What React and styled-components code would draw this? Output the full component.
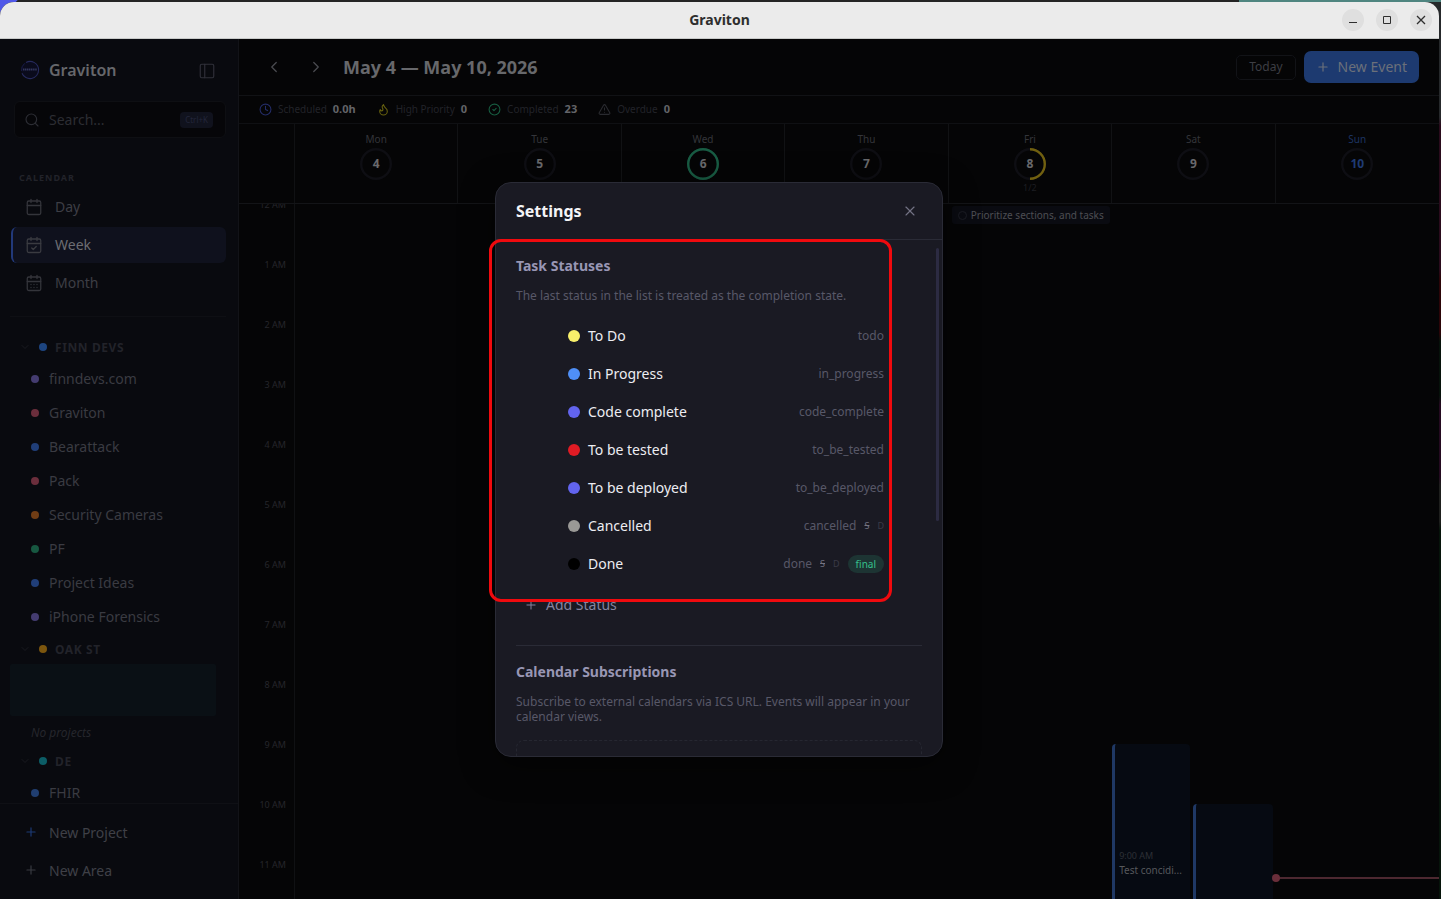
import React from 'react'
import styled, { createGlobalStyle, css } from 'styled-components'
import {
  Calendar, CalendarCheck, CalendarDays, ChevronDown, ChevronLeft, ChevronRight,
  CircleCheck, Clock, Flame, PanelLeft, Plus, Search, TriangleAlert, X
} from 'lucide-react'

const HOUR = 60

const areas = [
  {
    name: 'FINN DEVS',
    color: '#1d4580',
    projects: [
      { name: 'finndevs.com', color: '#443c70' },
      { name: 'Graviton', color: '#6b2e3c' },
      { name: 'Bearattack', color: '#203e78' },
      { name: 'Pack', color: '#6b2e3c' },
      { name: 'Security Cameras', color: '#703d15' },
      { name: 'PF', color: '#175841' },
      { name: 'Project Ideas', color: '#203e78' },
      { name: 'iPhone Forensics', color: '#443c70' }
    ]
  },
  { name: 'OAK ST', color: '#7c560e', projects: [] },
  { name: 'DE', color: '#0c5d66', projects: [{ name: 'FHIR', color: '#203e70' }] }
]

const days = [
  { name: 'Mon', date: 4 },
  { name: 'Tue', date: 5 },
  { name: 'Wed', date: 6, progress: 1, color: '#185c43' },
  { name: 'Thu', date: 7 },
  { name: 'Fri', date: 8, progress: 0.5, color: '#71600f', count: '1/2' },
  { name: 'Sat', date: 9 },
  { name: 'Sun', date: 10, today: true }
]

const hours = ['12 AM', '1 AM', '2 AM', '3 AM', '4 AM', '5 AM', '6 AM', '7 AM', '8 AM', '9 AM', '10 AM', '11 AM']

const statuses = [
  { name: 'To Do', slug: 'todo', color: '#f9f06b' },
  { name: 'In Progress', slug: 'in_progress', color: '#4f8ff7' },
  { name: 'Code complete', slug: 'code_complete', color: '#6264ee' },
  { name: 'To be tested', slug: 'to_be_tested', color: '#e01b24' },
  { name: 'To be deployed', slug: 'to_be_deployed', color: '#6264ee' },
  { name: 'Cancelled', slug: 'cancelled', color: '#9a9996', flags: true },
  { name: 'Done', slug: 'done', color: '#000000', flags: true, final: true }
]

const GlobalStyle = createGlobalStyle`
  * {
    box-sizing: border-box;
  }
  body {
    margin: 0;
    font-family: 'Noto Sans', sans-serif;
    font-size: 14px;
    overflow: hidden;
  }
  button, input {
    font-family: inherit;
    font-size: inherit;
    margin: 0;
  }
  h1, h2, h3, p, ul {
    margin: 0;
    padding: 0;
  }
  ul {
    list-style: none;
  }
`

const Desktop = styled.div`
  height: 100vh;
  padding: 2px 2px 0 0;
  background:
    linear-gradient(135deg, #5058e8 0 12px, transparent 13px),
    linear-gradient(90deg, #242424 0 86%, #4f8580 86%) top / 100% 2px no-repeat,
    linear-gradient(180deg, #26292b 0 13%, #2a0b1c 14% 30%, #2c0508 31% 37%, #06120a 38% 44%, #240a20 45% 53%, #1e1f1d 54% 58%, #06140a 59% 100%);
`

const Window = styled.div`
  height: 100%;
  display: flex;
  flex-direction: column;
  overflow: hidden;
  border-radius: 14px 14px 0 0;
  background: #050506;
`

const TitleBar = styled.header`
  display: grid;
  grid-template-columns: 1fr auto 1fr;
  align-items: center;
  flex: none;
  height: 37px;
  padding: 0 7px;
  background: #ebebeb;
  border-bottom: 1px solid #c8cac9;
`

const WindowTitle = styled.h1`
  grid-column: 2;
  font-size: 14px;
  font-weight: 700;
  line-height: 20px;
  color: #2e2e2e;
`

const WindowButtons = styled.div`
  display: flex;
  justify-content: flex-end;
  gap: 12px;
`

const RoundButton = styled.button`
  display: grid;
  place-items: center;
  width: 22px;
  height: 22px;
  padding: 0;
  border: none;
  border-radius: 50%;
  background: #dfdfdf;
  color: #2e2e2e;
`

const AppBody = styled.div`
  position: relative;
  flex: 1;
  min-height: 0;
  display: flex;
`

const Sidebar = styled.aside`
  flex: none;
  width: 239px;
  display: flex;
  flex-direction: column;
  background: #090a0f;
  border-right: 1px solid #121318;
  color: #3a3b42;
`

const Brand = styled.div`
  display: flex;
  align-items: center;
  gap: 9px;
  padding: 20px 24px 20px 20px;
  height: 62px;
  color: #30313a;
`

const BrandName = styled.h2`
  flex: 1;
  font-size: 16px;
  font-weight: 600;
  line-height: 22px;
  color: #66676b;
`

const IconButton = styled.button`
  display: grid;
  place-items: center;
  width: ${props => props.$size || '16px'};
  height: ${props => props.$size || '16px'};
  padding: 0;
  border: none;
  background: none;
  color: ${props => props.$color || 'inherit'};
`

const SearchBox = styled.label`
  display: flex;
  align-items: center;
  gap: 9px;
  height: 37px;
  margin: 0 12px 0 14px;
  padding: 0 12px 0 9px;
  border: 1px solid #0e0f13;
  border-radius: 6px;
  background: #060609;
  color: #2c2d34;
`

const SearchInput = styled.input`
  flex: 1;
  min-width: 0;
  padding: 0;
  border: none;
  outline: none;
  background: none;
  color: #55565c;
  &::placeholder {
    color: #2c2d33;
    opacity: 1;
  }
`

const Kbd = styled.kbd`
  padding: 0 5px;
  border-radius: 4px;
  background: #10121d;
  color: #23263a;
  font-family: inherit;
  font-size: 8px;
  line-height: 16px;
`

const Nav = styled.nav`
  display: flex;
  flex-direction: column;
  gap: 2px;
  margin-top: 32px;
  padding: 0 12px 15px 11px;
`

const NavLabel = styled.h3`
  padding: 0 8px;
  margin-bottom: 1px;
  font-size: 9px;
  font-weight: 700;
  line-height: 16px;
  letter-spacing: 1px;
  color: #22232a;
`

const NavItem = styled.a`
  display: flex;
  align-items: center;
  gap: 12px;
  height: 36px;
  padding: 0 12px;
  border-left: 2px solid transparent;
  border-radius: 6px;
  line-height: 20px;
  text-decoration: none;
  color: #3d3e45;

  ${props => props.$active && css`
    background: #0f111d;
    border-left-color: #22397a;
    color: #6c6d72;
  `};

  svg {
    color: ${props => props.$active ? '#3a3b41' : '#34353b'};
  }
`

const Areas = styled.div`
  flex: 1;
  min-height: 0;
  overflow: hidden;
  margin: 0 12px 0 10px;
  padding-top: 15px;
  border-top: 1px solid #0e0f14;
`

const AreaTitle = styled.button`
  display: flex;
  align-items: center;
  width: 100%;
  height: 30px;
  padding: 0 0 0 9px;
  border: none;
  background: none;
  font-size: 12px;
  font-weight: 700;
  letter-spacing: 0.05em;
  color: #22232a;

  svg {
    margin-right: 8px;
    color: #191a20;
  }
`

const Dot = styled.span`
  flex: none;
  width: ${props => props.$size || 8}px;
  height: ${props => props.$size || 8}px;
  border-radius: 50%;
  background: ${props => props.$color};
`

const AreaName = styled.span`
  margin-left: 8px;
`

const Project = styled.a`
  display: flex;
  align-items: center;
  gap: 10px;
  height: 34px;
  padding-left: 21px;
  line-height: 18px;
  text-decoration: none;
  color: #3a3b42;
`

const DropZone = styled.div`
  height: 52px;
  margin-right: 10px;
  border-radius: 2px;
  background: #0a1015;
`

const Empty = styled.p`
  padding: 8px 0 4px 21px;
  font-size: 12px;
  font-style: italic;
  line-height: 18px;
  color: #25262c;
`

const SidebarFooter = styled.footer`
  display: flex;
  flex-direction: column;
  gap: 2px;
  padding: 10px 12px 11px;
  border-top: 1px solid #0f1015;
`

const FooterButton = styled.button`
  display: flex;
  align-items: center;
  gap: 11px;
  height: 36px;
  padding: 0 12px;
  border: none;
  background: none;
  color: #3f4047;

  svg {
    color: ${props => props.$accent || '#3a3b42'};
  }
`

const Main = styled.main`
  flex: 1;
  min-width: 0;
  display: flex;
  flex-direction: column;
  background: #050506;
`

const Toolbar = styled.div`
  display: flex;
  align-items: center;
  flex: none;
  height: 57px;
  padding: 0 20px 0 25px;
  border-bottom: 1px solid #111215;
`

const Pager = styled.div`
  display: flex;
  gap: 22px;
  color: #4a4b50;
`

const Range = styled.h2`
  flex: 1;
  margin-left: 17px;
  font-size: 18px;
  font-weight: 700;
  line-height: 24px;
  color: #67686b;
`

const Button = styled.button`
  display: flex;
  align-items: center;
  gap: ${props => props.$primary ? '8px' : '0'};
  height: ${props => props.$primary ? '32px' : '25px'};
  padding: 0 12px;
  margin-left: 8px;
  border: ${props => props.$primary ? 'none' : '1px solid #121317'};
  border-radius: ${props => props.$primary ? '7px' : '5px'};
  background: ${props => props.$primary ? '#1d3a70' : 'transparent'};
  color: ${props => props.$primary ? '#6b707a' : '#3d3e44'};
  font-size: ${props => props.$primary ? '14px' : '12px'};
  line-height: 18px;
  white-space: nowrap;
`

const Stats = styled.div`
  display: flex;
  align-items: center;
  flex: none;
  gap: 21px;
  height: 28px;
  padding: 0 20px 1px;
  border-bottom: 1px solid #0f1013;
`

const Stat = styled.div`
  display: flex;
  align-items: center;
  gap: 6px;
  font-size: 10px;
  line-height: 16px;
  color: #222329;

  svg {
    color: ${props => props.$color};
  }
  b {
    font-size: 11px;
    font-weight: 700;
    color: #636468;
  }
`

const Week = styled.div`
  display: grid;
  grid-template-columns: 56px repeat(7, 1fr);
  ${props => props.$head ? css`
    flex: none;
    height: 80px;
    border-bottom: 1px solid #131417;
  ` : css`
    flex: 1;
    min-height: 0;
    overflow: hidden;
  `};
`

const Gutter = styled.div`
  border-right: 1px solid #101113;
`

const HourLabel = styled.div`
  height: ${HOUR}px;
  padding-right: 8px;
  text-align: right;
  font-size: 9px;
  line-height: 12px;
  color: #25262b;
`

const HourList = styled(Gutter)`
  margin-top: -5px;
`

const DayHead = styled.div`
  display: flex;
  flex-direction: column;
  align-items: center;
  padding-top: 8px;
  font-size: 10px;
  line-height: 14px;
  color: ${props => props.$today ? '#1d3462' : '#34353a'};
  border-right: 1px solid #111214;

  &:last-child {
    border-right: none;
  }
`

const Ring = styled.div`
  display: grid;
  place-items: center;
  margin-top: 2px;
  color: ${props => props.$today ? '#1f3b73' : '#69696c'};
  font-size: 12px;
  font-weight: 700;
  line-height: 16px;

  > * {
    grid-area: 1 / 1;
  }
`

const Count = styled.span`
  margin-top: 1px;
  font-size: 9px;
  color: #1d1e22;
`

const DayColumn = styled.div`
  display: grid;
  grid-template-columns: ${props => props.$split ? '78px 80px' : '1fr'};
  align-items: start;
  column-gap: 3px;
  position: relative;
  min-width: 0;
`

const AllDay = styled.div`
  display: flex;
  align-items: center;
  gap: 4px;
  height: 18px;
  margin: 2px 3px;
  padding: 0 6px;
  border-radius: 3px;
  background: #0a0b11;
  color: #4d4e53;
  font-size: 10px;
  line-height: 14px;
  white-space: nowrap;
`

const Circle = styled.span`
  width: 9px;
  height: 9px;
  border: 1px solid #1b1c24;
  border-radius: 50%;
`

const Event = styled.article`
  display: flex;
  flex-direction: column;
  justify-content: center;
  min-width: 0;
  height: ${props => props.$length * HOUR}px;
  margin-top: ${props => props.$start * HOUR}px;
  padding: 0 4px 2px;
  border-left: 3px solid #1f3864;
  border-radius: 4px;
  background: #060a12;
`

const EventTime = styled.span`
  font-size: 9px;
  line-height: 14px;
  color: #2d3036;
`

const EventName = styled.span`
  white-space: nowrap;
  font-size: 10px;
  line-height: 15px;
  color: #56585c;
`

const NowLine = styled.div`
  position: absolute;
  top: ${props => props.$at * HOUR}px;
  left: 0;
  right: 0;
  height: 2px;
  background: #4d2830;

  &::before {
    content: '';
    position: absolute;
    left: -4px;
    top: -3px;
    width: 8px;
    height: 8px;
    border-radius: 50%;
    background: #6a2e3a;
  }
`

const Overlay = styled.div`
  position: absolute;
  inset: 0;
  display: grid;
  place-items: center;
  padding-right: 1px;
`

const DialogFrame = styled.div`
  position: relative;
  width: 448px;
  max-width: 100%;
`

const Dialog = styled.section`
  display: flex;
  flex-direction: column;
  max-height: calc(100vh - 324px);
  overflow: hidden;
  border: 1px solid #2a2b36;
  border-radius: 16px;
  background: #1a1a23;
  box-shadow: 0 8px 32px rgba(0, 0, 0, 0.5);
`

const DialogHead = styled.header`
  display: flex;
  align-items: center;
  justify-content: space-between;
  flex: none;
  height: 57px;
  padding: 0 24px 0 20px;
  border-bottom: 1px solid #2a2b36;
`

const DialogTitle = styled.h2`
  font-size: 16px;
  font-weight: 700;
  line-height: 24px;
  color: #f4f4f7;
`

const DialogBody = styled.div`
  position: relative;
  min-height: 0;
  overflow: hidden;
  padding: 16px 20px;
`

const ScrollThumb = styled.div`
  position: absolute;
  top: 8px;
  right: 3px;
  width: 3px;
  height: 273px;
  border-radius: 2px;
  background: #2c2b42;
`

const Section = styled.section`
  & + & {
    margin-top: 24px;
    padding-top: 16px;
    border-top: 1px solid #2a2b36;
  }
`

const SectionTitle = styled.h3`
  font-size: 14px;
  font-weight: 700;
  line-height: 20px;
  color: #9896b4;
`

const Hint = styled.p`
  margin: 12px 0 ${props => props.$tight ? '16px' : '14px'};
  font-size: 12px;
  line-height: 15px;
  color: #585868;
`

const StatusRow = styled.li`
  display: flex;
  align-items: center;
  gap: 8px;
  height: 38px;
  padding: 0 38px 0 52px;
  color: #ededf2;
`

const StatusName = styled.span`
  flex: 1;
`

const Slug = styled.span`
  font-size: 12px;
  color: #585868;
`

const Flag = styled.span`
  font-size: 9px;
  color: ${props => props.$struck ? '#747482' : '#3a3a48'};
  text-decoration: ${props => props.$struck ? 'line-through' : 'none'};
`

const Final = styled.span`
  padding: 0 8px;
  border-radius: 9px;
  background: #1d3433;
  color: #35c08c;
  font-size: 10px;
  line-height: 18px;
`

const AddButton = styled.button`
  display: flex;
  align-items: center;
  gap: 8px;
  height: 32px;
  margin-top: 6px;
  padding: 0 8px;
  border: none;
  background: none;
  color: #8684a0;
`

const Feeds = styled.div`
  height: 80px;
  border: 1px dashed #262731;
  border-radius: 8px;
`

const Highlight = styled.div`
  position: absolute;
  top: 57px;
  left: -6px;
  width: 403px;
  height: 363px;
  border: 3px solid #f00a0e;
  border-radius: 12px;
  pointer-events: none;
`

const Logo = () => (
  <svg width="20" height="20" viewBox="0 0 20 20" fill="none" aria-hidden="true">
    <circle cx="10" cy="10" r="9" fill="#0a0b1c" />
    <path d="M6 2.4A8.6 8.6 0 0 1 18.6 10A8.6 8.6 0 0 1 2 13.2" stroke="#262a5c" strokeWidth="1.1" />
    <path d="M1.6 11A8.6 8.6 0 0 1 4.6 3.4" stroke="#191c48" strokeWidth="1" />
    <path d="M3 9.5h14" stroke="#33375c" strokeWidth="2" strokeDasharray="1.4 .5" />
  </svg>
)

const ProgressRing = ({ progress = 0, color }) => (
  <svg width="32" height="32" viewBox="0 0 32 32" fill="none" aria-hidden="true">
    <circle cx="16" cy="16" r="14.8" stroke="#0e0e13" strokeWidth="2.4" />
    {progress > 0 && (
      <circle
        cx="16" cy="16" r="14.8" stroke={color} strokeWidth="2.4"
        pathLength="100" strokeDasharray={`${progress * 100} 100`}
        transform="rotate(-90 16 16)"
      />
    )}
  </svg>
)

const WindowBar = () => (
  <TitleBar>
    <WindowTitle>Graviton</WindowTitle>
    <WindowButtons>
      <RoundButton aria-label="Minimize">
        <svg width="10" height="10" stroke="currentColor"><path d="M1 7.5h8" /></svg>
      </RoundButton>
      <RoundButton aria-label="Maximize">
        <svg width="10" height="10" fill="none" stroke="currentColor"><path d="M1.5 1.5h7v7h-7z" /></svg>
      </RoundButton>
      <RoundButton aria-label="Close">
        <svg width="10" height="10" stroke="currentColor" strokeWidth="1.3"><path d="M1 1l8 8M9 1L1 9" /></svg>
      </RoundButton>
    </WindowButtons>
  </TitleBar>
)

const SideMenu = () => (
  <Sidebar>
    <Brand>
      <Logo />
      <BrandName>Graviton</BrandName>
      <IconButton aria-label="Collapse sidebar"><PanelLeft size={18} strokeWidth={1.5} /></IconButton>
    </Brand>
    <SearchBox>
      <Search size={16} strokeWidth={1.7} />
      <SearchInput type="search" placeholder="Search..." aria-label="Search" />
      <Kbd>Ctrl+K</Kbd>
    </SearchBox>
    <Nav>
      <NavLabel>CALENDAR</NavLabel>
      <NavItem href="#day"><Calendar size={18} strokeWidth={1.7} />Day</NavItem>
      <NavItem href="#week" $active><CalendarCheck size={18} strokeWidth={1.7} />Week</NavItem>
      <NavItem href="#month"><CalendarDays size={18} strokeWidth={1.7} />Month</NavItem>
    </Nav>
    <Areas>
      {areas.map(area => (
        <React.Fragment key={area.name}>
          <AreaTitle>
            <ChevronDown size={12} />
            <Dot $color={area.color} />
            <AreaName>{area.name}</AreaName>
          </AreaTitle>
          {area.projects.map(project => (
            <Project key={project.name} href="#project">
              <Dot $color={project.color} />
              {project.name}
            </Project>
          ))}
          {!area.projects.length && (
            <>
              <DropZone />
              <Empty>No projects</Empty>
            </>
          )}
        </React.Fragment>
      ))}
    </Areas>
    <SidebarFooter>
      <FooterButton $accent="#1d3a75"><Plus size={14} />New Project</FooterButton>
      <FooterButton><Plus size={14} />New Area</FooterButton>
    </SidebarFooter>
  </Sidebar>
)

const WeekView = () => (
  <Main>
    <Toolbar>
      <Pager>
        <IconButton aria-label="Previous week" $size="20px"><ChevronLeft size={18} strokeWidth={1.7} /></IconButton>
        <IconButton aria-label="Next week" $size="20px"><ChevronRight size={18} strokeWidth={1.7} /></IconButton>
      </Pager>
      <Range>May 4 — May 10, 2026</Range>
      <Button>Today</Button>
      <Button $primary><Plus size={14} />New Event</Button>
    </Toolbar>
    <Stats>
      <Stat $color="#232c66"><Clock size={13} />Scheduled <b>0.0h</b></Stat>
      <Stat $color="#66600f"><Flame size={13} />High Priority <b>0</b></Stat>
      <Stat $color="#175c40"><CircleCheck size={13} />Completed <b>23</b></Stat>
      <Stat $color="#2a2b30"><TriangleAlert size={13} />Overdue <b>0</b></Stat>
    </Stats>
    <Week $head>
      <Gutter />
      {days.map(day => (
        <DayHead key={day.name} $today={day.today}>
          {day.name}
          <Ring $today={day.today}>
            <ProgressRing progress={day.progress} color={day.color} />
            <span>{day.date}</span>
          </Ring>
          {day.count && <Count>{day.count}</Count>}
        </DayHead>
      ))}
    </Week>
    <Week>
      <HourList>
        {hours.map(hour => <HourLabel key={hour}>{hour}</HourLabel>)}
      </HourList>
      <DayColumn />
      <DayColumn />
      <DayColumn />
      <DayColumn />
      <DayColumn>
        <AllDay><Circle />Prioritize sections, and tasks</AllDay>
      </DayColumn>
      <DayColumn $split>
        <Event $start={9} $length={4}>
          <EventTime>9:00 AM</EventTime>
          <EventName>Test concidi...</EventName>
        </Event>
        <Event $start={10} $length={4} />
      </DayColumn>
      <DayColumn>
        <NowLine $at={11.22} />
      </DayColumn>
    </Week>
  </Main>
)

const SettingsDialog = () => (
  <Overlay>
    <DialogFrame>
      <Dialog role="dialog" aria-label="Settings">
        <DialogHead>
          <DialogTitle>Settings</DialogTitle>
          <IconButton aria-label="Close" $color="#747386"><X size={16} strokeWidth={1.7} /></IconButton>
        </DialogHead>
        <DialogBody>
          <Section>
            <SectionTitle>Task Statuses</SectionTitle>
            <Hint>The last status in the list is treated as the completion state.</Hint>
            <ul>
              {statuses.map(status => (
                <StatusRow key={status.slug}>
                  <Dot $size={12} $color={status.color} />
                  <StatusName>{status.name}</StatusName>
                  <Slug>{status.slug}</Slug>
                  {status.flags && <><Flag $struck>S</Flag><Flag>D</Flag></>}
                  {status.final && <Final>final</Final>}
                </StatusRow>
              ))}
            </ul>
            <AddButton><Plus size={14} strokeWidth={1.7} />Add Status</AddButton>
          </Section>
          <Section>
            <SectionTitle>Calendar Subscriptions</SectionTitle>
            <Hint $tight>Subscribe to external calendars via ICS URL. Events will appear in your calendar views.</Hint>
            <Feeds />
          </Section>
          <ScrollThumb />
        </DialogBody>
      </Dialog>
      <Highlight />
    </DialogFrame>
  </Overlay>
)

export default function App() {
  return (
    <Desktop>
      <GlobalStyle />
      <Window>
        <WindowBar />
        <AppBody>
          <SideMenu />
          <WeekView />
          <SettingsDialog />
        </AppBody>
      </Window>
    </Desktop>
  )
}
